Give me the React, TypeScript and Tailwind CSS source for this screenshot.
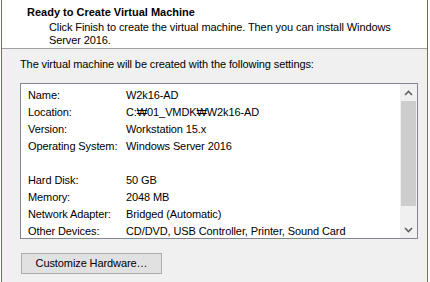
import React from 'react';

const rows: [string, string][] = [
  ['Name:', 'W2k16-AD'],
  ['Location:', 'C:₩01_VMDK₩W2k16-AD'],
  ['Version:', 'Workstation 15.x'],
  ['Operating System:', 'Windows Server 2016'],
  ['', ''],
  ['Hard Disk:', '50 GB'],
  ['Memory:', '2048 MB'],
  ['Network Adapter:', 'Bridged (Automatic)'],
  ['Other Devices:', 'CD/DVD, USB Controller, Printer, Sound Card'],
];

const App: React.FC = () => {
  return (
    <div
      className="w-[430px] h-[282px] bg-white pl-px pr-[2px] overflow-hidden text-[11px] tracking-[-0.1px] text-black"
      style={{ fontFamily: '"Liberation Sans", "Noto Sans CJK KR", sans-serif' }}
    >
      <div className="h-full border-x border-[#2b7bd6] flex flex-col">
        {/* Header */}
        <div className="h-[49px] bg-white border-b border-[#a0a0a0] shrink-0 whitespace-nowrap">
          <div className="pl-[25px] pt-[5px] font-bold text-[11px] tracking-normal leading-[14px]">Ready to Create Virtual Machine</div>
          <div className="pl-[47px] pt-[2px] leading-[13px]">
            Click Finish to create the virtual machine. Then you can install Windows
            <br />
            Server 2016.
          </div>
        </div>

        {/* Body */}
        <div className="flex-1 bg-[#f0f0f0] pl-[18px] pr-[9px]">
          <div className="pt-[8px] leading-[14px] whitespace-nowrap">
            The virtual machine will be created with the following settings:
          </div>

          <div className="mt-[12px] h-[156px] border border-[#828790] bg-white flex">
            <div className="flex-1 pl-[7px] pt-[3px]">
              {rows.map(([label, value], i) => (
                <div key={i} className="flex h-[17px] leading-[17px] whitespace-nowrap">
                  <div className="w-[98px] shrink-0">{label}</div>
                  <div>{value}</div>
                </div>
              ))}
            </div>
            {/* Scrollbar */}
            <div className="w-[17px] bg-[#f0f0f0] flex flex-col">
              <div className="h-[17px] flex items-center justify-center">
                <svg width="9" height="6" viewBox="0 0 9 6">
                  <path d="M1 5 L4.5 1.5 L8 5" fill="none" stroke="#606060" strokeWidth="1.6" />
                </svg>
              </div>
              <div className="h-[105px] bg-[#cdcdcd] mx-px" />
              <div className="flex-1" />
              <div className="h-[17px] flex items-center justify-center">
                <svg width="9" height="6" viewBox="0 0 9 6">
                  <path d="M1 1 L4.5 4.5 L8 1" fill="none" stroke="#606060" strokeWidth="1.6" />
                </svg>
              </div>
            </div>
          </div>

          <button
            type="button"
            className="mt-[14px] ml-px w-[141px] h-[21px] bg-[#e1e1e1] border border-[#adadad] text-[11px] leading-[19px] text-black"
          >
            Customize Hardware…
          </button>
        </div>
      </div>
    </div>
  );
};

export default App;
